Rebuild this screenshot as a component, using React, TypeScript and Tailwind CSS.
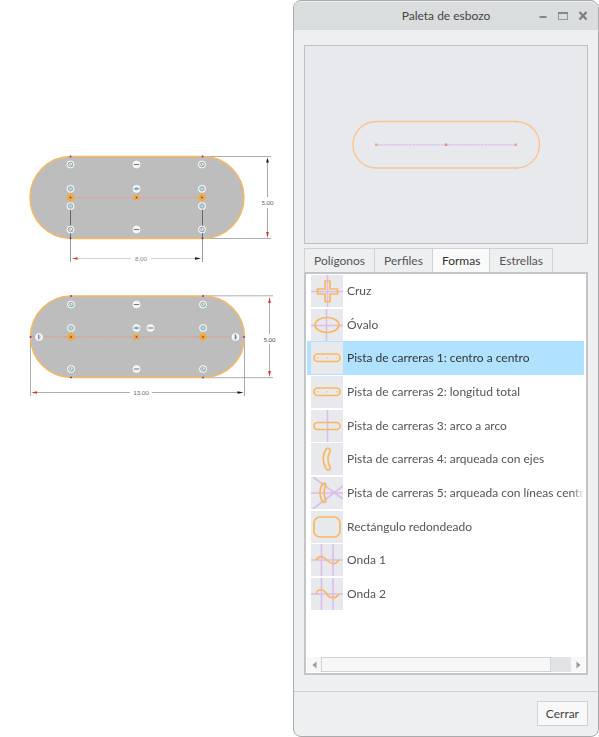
import React, { useState } from 'react';

const ORANGE = '#f9b85c';
const VIOLET = '#dcbcec';

type MarkerKind = 'tangent' | 'equal' | 'horizontal' | 'mid' | 'vertical';

const Marker: React.FC<{ x: number; y: number; kind: MarkerKind }> = ({ x, y, kind }) => (
  <g transform={`translate(${x} ${y})`}>
    <circle r="3.6" fill="#f4f4f4" stroke="#ffffff" strokeWidth="0.6" />
    {kind === 'horizontal' && <path d="M-2.7 0H2.7" stroke="#777" />}
    {kind === 'mid' && (
      <>
        <circle r="1.8" fill="#8fd0e8" />
        <path d="M-3 0H3" stroke="#667f88" strokeWidth="0.8" />
      </>
    )}
    {kind === 'vertical' && (
      <>
        <path d="M-0.2 -2.5V2.5" stroke="#667" />
        <path d="M1 -1.5V1.5" stroke="#7ac6e2" />
      </>
    )}
    {kind === 'tangent' && (
      <>
        <circle r="2.3" fill="none" stroke="#888" strokeWidth="0.8" />
        <path d="M0.3 0.3h2v2h-2z" fill="#6dbede" />
        <path d="M-0.5 -1V0.6" stroke="#555" strokeWidth="0.6" />
      </>
    )}
    {kind === 'equal' && <circle r="2.3" fill="#a5d8e9" stroke="#999" strokeWidth="0.8" />}
  </g>
);

const Star: React.FC<{ x: number; y: number; cross?: boolean }> = ({ x, y, cross }) => (
  <g transform={`translate(${x} ${y})`}>
    <path d="M-2.8 -2.8L2.8 2.8M2.8 -2.8L-2.8 2.8" stroke="#ffa414" strokeWidth="1.5" />
    {!cross && <path d="M-4.8 0H4.8M0 -4.8V4.8" stroke="#ffa414" strokeWidth="1.2" />}
    <circle r="1.8" fill="#ffa414" />
    <path d="M-0.7 -0.7h1.4v1.4h-1.4z" fill="#4432a8" />
  </g>
);

const Dots: React.FC<{ points: number[][] }> = ({ points }) => (
  <>
    {points.map(([x, y]) => (
      <path key={`${x}-${y}`} d={`M${x - 0.8} ${y - 0.8}h1.6v1.6h-1.6z`} fill="#3a2ee0" />
    ))}
  </>
);

const CenterSketch: React.FC = () => (
  <svg viewBox="0 148 293 120" className="block w-full" role="img" aria-label="Pista de carreras 1">
    <path d="M203 156.5H271M203 238.5H271" stroke="#999" strokeWidth="0.8" />
    <rect x="30" y="156.5" width="214" height="82" rx="41" fill="#bdbdbd" stroke={ORANGE} strokeWidth="1.4" />
    <path d="M70 197.5H202" stroke="#e8a096" strokeDasharray="3 1" />
    <path d="M70.5 207V238M202.5 207V238" stroke="#666" />
    <path d="M70.5 239V262M202.5 239V262" stroke="#999" />
    <path d="M76 258.5H131M151 258.5H196" stroke="#d4d4d4" />
    <path d="M267.5 161V197M267.5 208V233" stroke="#aaa" />
    <path d="M72 258.5l5.5 -1.3v2.6z" fill="#e22" />
    <path d="M201 258.5l-6 -1.3v2.6z" fill="#111" />
    <path d="M267.5 157.5l-1.3 5h2.6z" fill="#111" />
    <path d="M267.5 238l-1.3 -6h2.6z" fill="#e22" />
    <text x="141" y="260.5" textAnchor="middle" fontSize="6" fill="#888">8.00</text>
    <text x="267.5" y="204.5" textAnchor="middle" fontSize="6" fill="#555">5.00</text>
    {[70.5, 202].map((x) => (
      <g key={x}>
        <Marker x={x} y={164.5} kind="tangent" />
        <Marker x={x} y={188.8} kind="equal" />
        <Marker x={x} y={206} kind="equal" />
        <Marker x={x} y={229.5} kind="tangent" />
        <Star x={x} y={197.5} />
      </g>
    ))}
    <Marker x={136.5} y={164.5} kind="horizontal" />
    <Marker x={136.5} y={188.8} kind="mid" />
    <Marker x={136.5} y={229.5} kind="horizontal" />
    <Star x={136.5} y={197.5} cross />
    <Dots points={[[70.5, 156.5], [202.5, 156.5], [70.5, 238.3], [202.5, 238.3]]} />
  </svg>
);

const LengthSketch: React.FC = () => (
  <svg viewBox="0 288 293 120" className="block w-full" role="img" aria-label="Pista de carreras 2">
    <path d="M30.5 338V396M244.5 338V396M203 295.8H273M203 377.7H273" stroke="#999" strokeWidth="0.8" />
    <rect x="30.5" y="296" width="214" height="81.5" rx="40.75" fill="#bdbdbd" stroke={ORANGE} strokeWidth="1.4" />
    <path d="M30.5 336.8H244" stroke="#f08c7a" strokeWidth="0.8" strokeDasharray="2 1" />
    <path d="M36 392.5H130M152 392.5H239" stroke="#999" strokeWidth="0.8" />
    <path d="M269.5 301V334M269.5 344V372" stroke="#999" strokeWidth="0.8" />
    <path d="M31.5 392.5l5.5 -1.3v2.6z" fill="#e22" />
    <path d="M243.5 392.5l-6 -1.3v2.6z" fill="#111" />
    <path d="M269.5 297l-1.3 6h2.6zM269.5 377l-1.3 -6h2.6z" fill="#e22" />
    <text x="141" y="395" textAnchor="middle" fontSize="6" fill="#666">13.00</text>
    <text x="269.5" y="341.5" textAnchor="middle" fontSize="6" fill="#444">5.00</text>
    {[71, 203].map((x) => (
      <g key={x}>
        <Marker x={x} y={304.5} kind="tangent" />
        <Marker x={x} y={328} kind="equal" />
        <Marker x={x} y={369} kind="tangent" />
        <Star x={x} y={337} />
      </g>
    ))}
    <Marker x={136.5} y={304.5} kind="horizontal" />
    <Marker x={136.5} y={328} kind="mid" />
    <Marker x={150.5} y={328} kind="horizontal" />
    <Marker x={136.5} y={369} kind="horizontal" />
    <Marker x={39} y={337} kind="vertical" />
    <Marker x={235.5} y={337} kind="vertical" />
    <Star x={136.5} y={337} cross />
    <Dots points={[[71, 296], [203, 296], [71, 377.5], [203, 377.5], [30.5, 337], [244, 337]]} />
  </svg>
);

const RacetrackDots = () => (
  <>
    <rect x="3" y="12" width="26" height="7.5" rx="3.75" />
    <path d="M6 15.8h1.5M15.5 15.8h1.5M25 15.8h1.5" strokeWidth="1" />
  </>
);

const SHAPES: { name: string; guides?: string; art: React.ReactNode }[] = [
  {
    name: 'Cruz',
    guides: 'M0 16.5H32M16.5 0V32',
    art: <path d="M14 6h5v8h7.5v5h-7.5v7.5h-5v-7.5h-7.5v-5h7.5z" />,
  },
  { name: 'Óvalo', guides: 'M0 16.5H32M15.5 0V32', art: <ellipse cx="16" cy="16" rx="12" ry="7.5" /> },
  { name: 'Pista de carreras 1: centro a centro', art: <RacetrackDots /> },
  { name: 'Pista de carreras 2: longitud total', art: <RacetrackDots /> },
  {
    name: 'Pista de carreras 3: arco a arco',
    guides: 'M16.5 0V32',
    art: <rect x="3" y="12.5" width="26" height="7" rx="3.5" />,
  },
  {
    name: 'Pista de carreras 4: arqueada con ejes',
    art: <path d="M14.8 6.5C11.5 12 11.5 19 15 25.5C16 28 20.5 27 19 24C16.5 19 16.5 13 19 8.5C20 5.5 16.5 4 14.8 6.5z" />,
  },
  {
    name: 'Pista de carreras 5: arqueada con líneas centr',
    guides: 'M0 16H32M2 0L32 22M2 32L32 9',
    art: <path d="M11 7.5C8.5 12.5 8.5 18.5 11 24C12 26.5 16 25.5 14.8 22.5C12.7 18 12.7 13 14.8 9C15.8 6.5 12 5 11 7.5z" />,
  },
  { name: 'Rectángulo redondeado', art: <rect x="3" y="6" width="26" height="20" rx="6" /> },
  {
    name: 'Onda 1',
    guides: 'M0 16H32M10.5 0V32M22 0V32',
    art: <path d="M5 16C8 11.5 12 11.5 16 16C20 20.5 24 21.5 28 16" />,
  },
  {
    name: 'Onda 2',
    guides: 'M0 16H32M10.5 0V32M22 0V32',
    art: <path d="M5 15.5C7 10.5 12 10.5 15.5 15.5C18 20.5 25 21.5 28 16" />,
  },
];

const TABS = ['Polígonos', 'Perfiles', 'Formas', 'Estrellas'];

const TitleBar: React.FC = () => (
  <header className="grid h-7 shrink-0 grid-cols-[1fr_auto_1fr] items-center bg-[#d9dddd]">
    <h1 className="col-start-2 text-[#444]">Paleta de esbozo</h1>
    <div className="flex items-center justify-end gap-2 pr-[9px]">
      <button type="button" aria-label="Minimizar">
        <svg width="12" height="12" viewBox="0 0 12 12"><path d="M2.5 7h7" stroke="#858889" strokeWidth="2" /></svg>
      </button>
      <button type="button" aria-label="Maximizar">
        <svg width="12" height="12" viewBox="0 0 12 12">
          <rect x="1.5" y="2.5" width="9" height="7" fill="none" stroke="#959899" />
          <path d="M1 3h10" stroke="#858889" strokeWidth="2" />
        </svg>
      </button>
      <button type="button" aria-label="Cerrar ventana">
        <svg width="12" height="12" viewBox="0 0 12 12"><path d="M2.5 2l7 7.5M9.5 2l-7 7.5" stroke="#7c7e7f" strokeWidth="2.2" /></svg>
      </button>
    </div>
  </header>
);

const Preview: React.FC = () => (
  <div className="border border-[#bfc1c3] bg-[#e8e9ed]">
    <svg viewBox="305 46 282 197" className="block w-full" role="img" aria-label="Vista previa">
      <rect x="353" y="121.5" width="186.5" height="46.5" rx="23.25" fill="none" stroke="#fbc48d" strokeWidth="1.3" />
      <path d="M376 144.8H516" stroke="#dcc0ee" strokeWidth="1.3" strokeDasharray="3 0.6" />
      <path d="M375 143.5h2.5v2.5h-2.5zM514.5 143.5h2.5v2.5h-2.5z" fill="#e0ad8c" />
      <path d="M444.8 143.5h2.5v2.5h-2.5z" fill="#d68b8b" />
      <path d="M375.5 121.5h1.5M375.5 168h1.5M515 121.5h1.5M515 168h1.5" stroke="#b5c3cf" />
    </svg>
  </div>
);

const ScrollBar: React.FC = () => (
  <div className="mx-px mb-px flex h-[15px] shrink-0 bg-[#e1e3e5]">
    <button type="button" aria-label="Desplazar a la izquierda" className="flex w-[14px] items-center justify-center bg-[#f7f7f7]">
      <svg width="5" height="8" viewBox="0 0 5 8"><path d="M4.5 0.5v7L0.5 4z" fill="#999" /></svg>
    </button>
    <div className="flex flex-1">
      <div className="w-[92%] border border-[#d0d2d4] bg-[#f7f7f7]" />
    </div>
    <button type="button" aria-label="Desplazar a la derecha" className="flex w-[14px] items-center justify-center bg-[#f7f7f7]">
      <svg width="5" height="8" viewBox="0 0 5 8"><path d="M0.5 0.5v7L4.5 4z" fill="#999" /></svg>
    </button>
  </div>
);

export default function App() {
  const [tab, setTab] = useState('Formas');
  const [selected, setSelected] = useState(2);

  return (
    <div className="grid min-h-screen grid-cols-[293fr_306fr] bg-white font-[Lato,sans-serif] text-xs">
      <main className="flex min-w-0 flex-col gap-5 pt-[148px]">
        <CenterSketch />
        <LengthSketch />
      </main>

      <section className="flex min-w-0 flex-col overflow-hidden rounded-lg border border-[#a9abac] bg-[#eeeff1] pt-px">
        <TitleBar />
        <div className="flex flex-1 flex-col px-[10px] pt-[15px] pb-4">
          <Preview />

          <div role="tablist" className="mt-1 flex">
            {TABS.map((name) => (
              <button
                key={name}
                type="button"
                role="tab"
                aria-selected={tab === name}
                onClick={() => setTab(name)}
                className={`h-6 border-t border-l border-[#d0d2d4] px-[9px] last:border-r ${
                  tab === name ? 'bg-[#fafafa] text-[#333]' : 'bg-[#eeeff0] text-[#555]'
                }`}
              >
                {name}
              </button>
            ))}
          </div>

          <div className="flex flex-1 flex-col border-2 border-[#c3c5c8] bg-white">
            <ul className="grid h-[337px] auto-rows-fr overflow-hidden pr-0.5 pl-px">
              {SHAPES.map((shape, index) => (
                <li key={shape.name} className="min-w-0">
                  <button
                    type="button"
                    aria-pressed={selected === index}
                    onClick={() => setSelected(index)}
                    className={`flex h-full w-full items-center gap-1 pl-1 text-left ${
                      selected === index ? 'bg-[#b0e2ff] text-[#333]' : 'text-[#555]'
                    }`}
                  >
                    <svg width="32" height="32" viewBox="0 0 32 32" fill="none" className="shrink-0 bg-[#e8e9ed]">
                      <path d={shape.guides} stroke={VIOLET} strokeWidth="1.6" />
                      <g stroke={ORANGE} strokeWidth="1.7">{shape.art}</g>
                    </svg>
                    <span className="min-w-0 flex-1 overflow-hidden mask-r-from-95% whitespace-nowrap">{shape.name}</span>
                  </button>
                </li>
              ))}
            </ul>
            <div className="flex-1" />
            <ScrollBar />
          </div>
        </div>

        <footer className="flex shrink-0 justify-end border-t border-[#cccecf] px-[10px] pt-[9px] pb-[10px]">
          <button type="button" className="h-[25px] border border-[#cfd1d2] bg-[#f8f8f8] px-2 text-[#444]">
            Cerrar
          </button>
        </footer>
      </section>
    </div>
  );
}
